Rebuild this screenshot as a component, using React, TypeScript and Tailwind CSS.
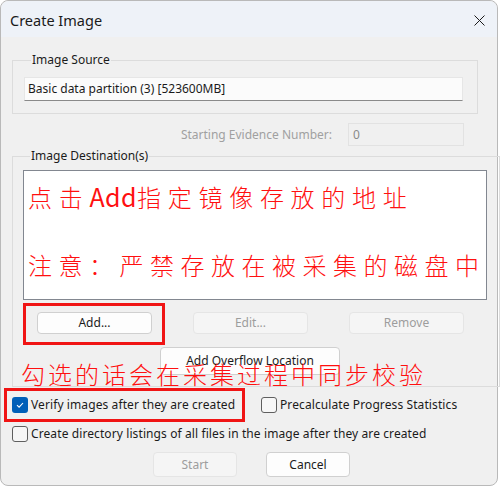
import React from "react";

const ui = "font-['Noto_Sans','Open_Sans',sans-serif]";
const cjk = "font-['Noto_Sans_CJK_SC',sans-serif]";

function Btn({
  label,
  disabled,
  className = "",
}: {
  label: string;
  disabled?: boolean;
  className?: string;
}) {
  return (
    <button
      className={`flex items-center justify-center rounded-[4px] border text-[12px] ${
        disabled
          ? "border-[#e5e5e5] bg-[#f5f5f5] text-[#9d9d9d]"
          : "border-[#d0d0d0] bg-[#fdfdfd] text-[#1b1b1b]"
      } ${className}`}
    >
      {label}
    </button>
  );
}

function Check({ checked, label }: { checked?: boolean; label: string }) {
  return (
    <label className="flex items-center gap-[3px] text-[12px] tracking-[0.1px] text-[#1b1b1b]">
      {checked ? (
        <span className="flex h-[16px] w-[16px] items-center justify-center rounded-[3px] bg-[#005fb8]">
          <svg width="10" height="10" viewBox="0 0 10 10">
            <path d="M2 5.2 L4.1 7.2 L8 3" fill="none" stroke="#fff" strokeWidth="1.1" />
          </svg>
        </span>
      ) : (
        <span className="h-[16px] w-[16px] rounded-[3px] border border-[#5f5f5f] bg-[#f7f7f7]" />
      )}
      <span>{label}</span>
    </label>
  );
}

export default function App() {
  return (
    <div className={`relative h-[486px] w-[500px] overflow-hidden bg-white ${ui}`}>
      <div className="flex h-[486px] w-[498px] flex-col rounded-lg border border-[#b9b9b9] bg-[#f0f0f0]">
        {/* Title bar */}
        <div className="flex h-[36px] shrink-0 items-center justify-between rounded-t-lg bg-[#eef2f8] pl-[9px] pr-[12px] pt-[3px]">
          <span className="text-[14.5px] text-[#1a1a1a]">Create Image</span>
          <svg width="11" height="11" viewBox="0 0 11 11">
            <path d="M0.5 0.5 L10.5 10.5 M10.5 0.5 L0.5 10.5" stroke="#1a1a1a" strokeWidth="1" />
          </svg>
        </div>

        {/* Image Source */}
        <fieldset className="ml-[11px] mt-[15px] w-[466px] border border-[#dcdcdc] pb-[12px] pl-[11px] pr-[14px] pt-[9px]">
          <legend className="ml-[7px] px-[1px] text-[12px] leading-[16px] text-[#1b1b1b]">Image Source</legend>
          <div className="flex h-[24px] items-center border border-[#e6e6e6] border-b-[#8a8a8a] bg-[#fbfbfb] pl-[3px] text-[12px] text-[#1b1b1b]">
            Basic data partition (3) [523600MB]
          </div>
        </fieldset>

        {/* Starting Evidence Number */}
        <div className="mt-[9px] flex w-[463px] items-center justify-end gap-[16px]">
          <span className="text-[12px] text-[#a0a0a0]">Starting Evidence Number:</span>
          <div className="flex h-[23px] w-[116px] items-center border border-[#e2e2e2] bg-[#f0f0f0] pl-[4px] text-[12px] text-[#8a8a8a]">
            0
          </div>
        </div>

        {/* Image Destination(s) */}
        <fieldset className="ml-[11px] mt-[2px] w-[466px] border border-[#dcdcdc] pb-[11px] pl-[10px] pr-[12px] pt-[6px]">
          <legend className="ml-[7px] px-[1px] text-[12px] leading-[16px] text-[#1b1b1b]">Image Destination(s)</legend>
          <div className={`h-[130px] border border-[#828790] bg-white pl-[4px] pt-[12px] text-[24px] font-light leading-[26px] text-[#ff1010] ${cjk}`}>
            <div className="whitespace-nowrap tracking-[6.7px]">
              点击<span className="text-[25px] font-normal tracking-[0.5px]">Add</span>指定镜像存放的地址
            </div>
            <div className="mt-[42px] whitespace-nowrap tracking-[6.5px]">注意：严禁存放在被采集的磁盘中</div>
          </div>
          <div className="mt-[12px] flex gap-[41px] pl-[14px]">
            <Btn label="Add..." className="h-[22px] w-[115px]" />
            <Btn label="Edit..." disabled className="h-[22px] w-[115px]" />
            <Btn label="Remove" disabled className="h-[22px] w-[115px]" />
          </div>
          <Btn label="Add Overflow Location" className="ml-[137px] mt-[13px] h-[28px] w-[180px]" />
        </fieldset>

        {/* Options */}
        <div className="ml-[11px] mt-[9px] flex">
          <div className="w-[249px]">
            <Check checked label="Verify images after they are created" />
          </div>
          <Check label="Precalculate Progress Statistics" />
        </div>
        <div className="ml-[11px] mt-[11px]">
          <Check label="Create directory listings of all files in the image after they are created" />
        </div>

        {/* Actions */}
        <div className="ml-[152px] mt-[9px] flex gap-[29px]">
          <Btn label="Start" disabled className="h-[25px] w-[84px]" />
          <Btn label="Cancel" className="h-[25px] w-[84px]" />
        </div>
      </div>

      {/* Annotations */}
      <div className="absolute left-[23px] top-[303px] h-[42px] w-[142px] border-[3px] border-[#f01414]" />
      <div className="absolute left-[4px] top-[388px] h-[34px] w-[241px] border-[3px] border-[#f01414]" />
      <div className={`absolute left-[21px] top-[360px] whitespace-nowrap text-[24px] font-light leading-[28px] tracking-[3px] text-[#ff1010] ${cjk}`}>
        勾选的话会在采集过程中同步校验
      </div>
    </div>
  );
}
